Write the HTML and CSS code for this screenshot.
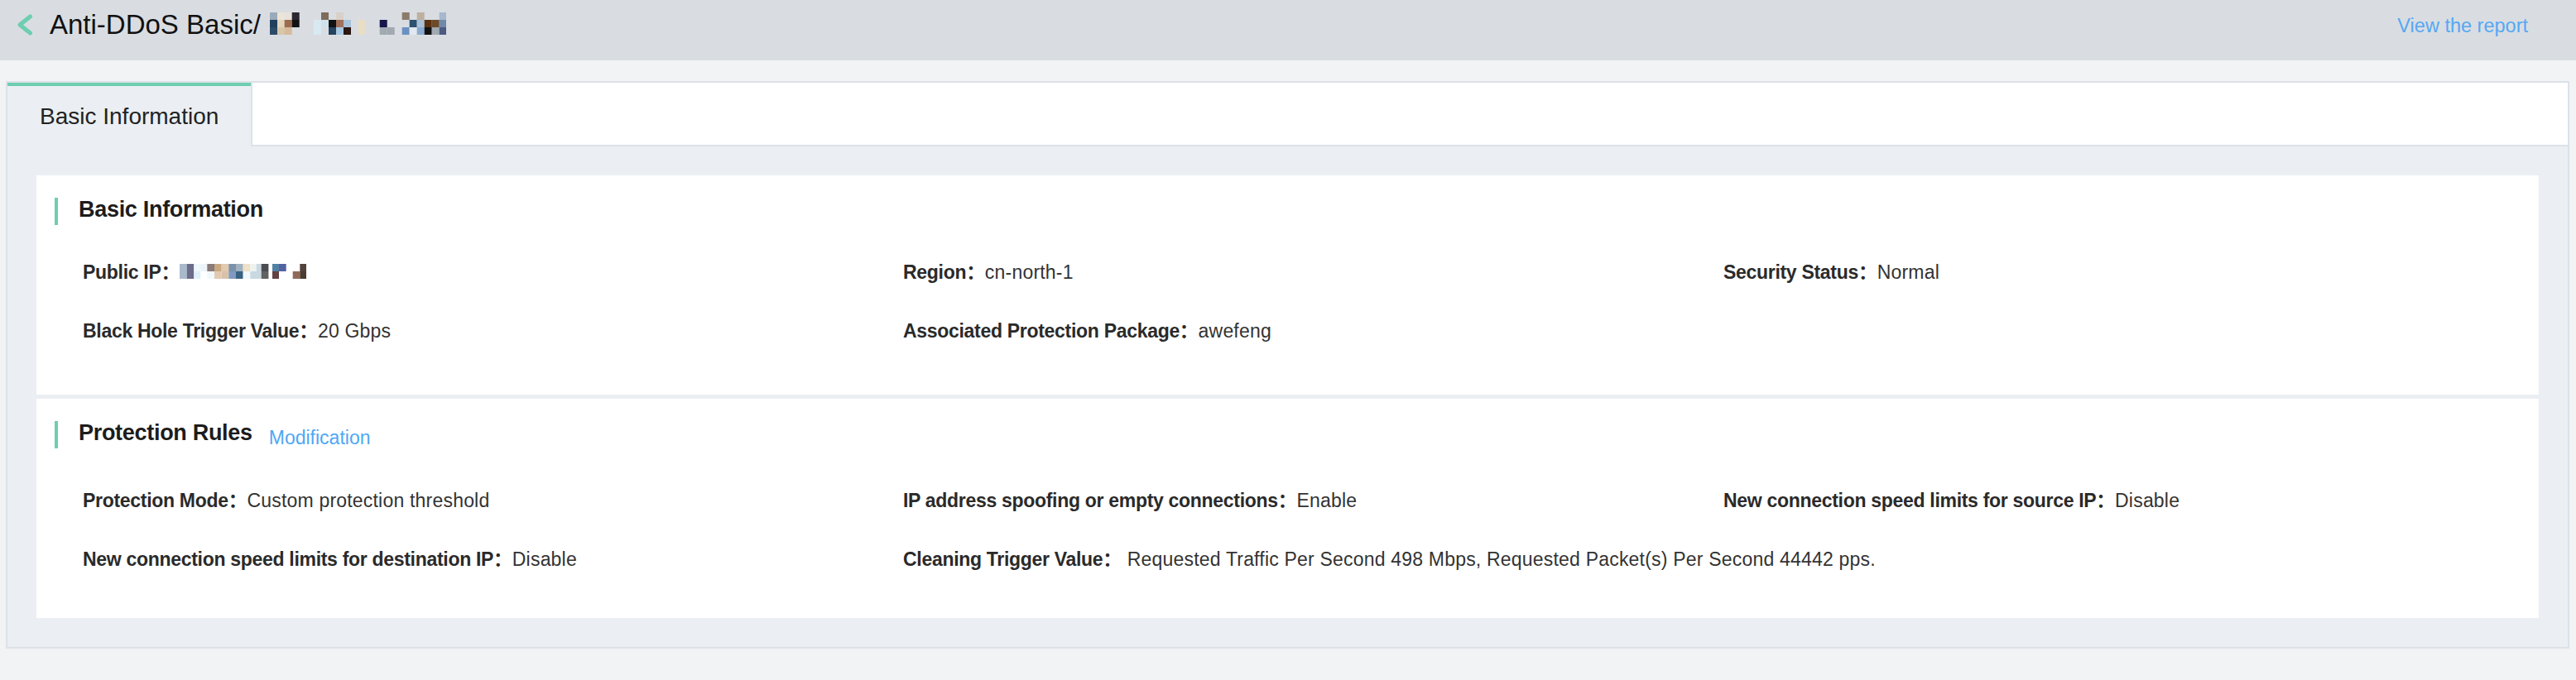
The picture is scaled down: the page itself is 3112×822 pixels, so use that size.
FILE: index.html
```html
<!DOCTYPE html>
<html lang="en">
<head>
<meta charset="utf-8">
<title>Anti-DDoS Basic</title>
<link rel="stylesheet" href="styles.css">
</head>
<body>
<header class="topbar">
  <div class="topbar-left">
    <svg class="back" width="20" height="26" viewBox="0 0 20 26" aria-hidden="true"><polyline points="16.5,3 4,13 16.5,23" fill="none" stroke="#6dceb0" stroke-width="5" stroke-linecap="round" stroke-linejoin="round"/></svg>
    <h1 class="page-title">Anti-DDoS Basic/</h1>
    <svg class="mosaic title-mosaic" width="213" height="27" viewBox="0 0 213 27" aria-hidden="true">
      <rect x="0" y="0" width="9" height="9" fill="#9aaabb"/>
      <rect x="9" y="0" width="9" height="9" fill="#ebe5d9"/>
      <rect x="17.7" y="0" width="9" height="9" fill="#e9e2dc"/>
      <rect x="26.7" y="0" width="9" height="9" fill="#2b2731"/>
      <rect x="62" y="0" width="9" height="9" fill="#7e6b5b"/>
      <rect x="80" y="0" width="9" height="9" fill="#d9d0c9"/>
      <rect x="159.7" y="0" width="9" height="9" fill="#8b7b6b"/>
      <rect x="177.7" y="0" width="9" height="9" fill="#beaf9e"/>
      <rect x="204.7" y="0" width="8.3" height="9" fill="#a7b7cd"/>
      <rect x="0" y="9" width="9" height="9" fill="#20405d"/>
      <rect x="9" y="9" width="9" height="9" fill="#e3d6bc"/>
      <rect x="17.7" y="9" width="9" height="9" fill="#9b6b51"/>
      <rect x="26.7" y="9" width="9" height="9" fill="#121212"/>
      <rect x="53" y="9" width="9" height="9" fill="#d9e9f1"/>
      <rect x="62" y="9" width="9" height="9" fill="#d0e1eb"/>
      <rect x="71" y="9" width="9" height="9" fill="#121212"/>
      <rect x="80" y="9" width="9" height="9" fill="#a1715b"/>
      <rect x="89" y="9" width="9" height="9" fill="#a7c2d9"/>
      <rect x="106.7" y="9" width="9" height="9" fill="#e9ddc5"/>
      <rect x="132.7" y="9" width="9" height="9" fill="#16164a"/>
      <rect x="168.7" y="9" width="9" height="9" fill="#2c5271"/>
      <rect x="177.7" y="9" width="9" height="9" fill="#a8c1d9"/>
      <rect x="186.7" y="9" width="9" height="9" fill="#5b3111"/>
      <rect x="195.7" y="9" width="9" height="9" fill="#6c4b2b"/>
      <rect x="204.7" y="9" width="8.3" height="9" fill="#7189a9"/>
      <rect x="0" y="18" width="9" height="9" fill="#2b4b69"/>
      <rect x="9" y="18" width="9" height="9" fill="#d9c7a9"/>
      <rect x="17.7" y="18" width="9" height="9" fill="#d7b99b"/>
      <rect x="53" y="18" width="9" height="9" fill="#d9e9f1"/>
      <rect x="71" y="18" width="9" height="9" fill="#25425f"/>
      <rect x="80" y="18" width="9" height="9" fill="#a9c9e1"/>
      <rect x="89" y="18" width="9" height="9" fill="#2b1611"/>
      <rect x="106.7" y="18" width="9" height="9" fill="#e9ddc5"/>
      <rect x="132.7" y="18" width="9" height="9" fill="#a1a9b1"/>
      <rect x="141.7" y="18" width="9" height="9" fill="#a1a9b1"/>
      <rect x="159.7" y="18" width="9" height="9" fill="#6b91c1"/>
      <rect x="168.7" y="18" width="9" height="9" fill="#e1e9f1"/>
      <rect x="177.7" y="18" width="9" height="9" fill="#8babd1"/>
      <rect x="186.7" y="18" width="9" height="9" fill="#121212"/>
      <rect x="195.7" y="18" width="9" height="9" fill="#a1a9b1"/>
      <rect x="204.7" y="18" width="8.3" height="9" fill="#4b5b81"/>
    </svg>
  </div>
  <a class="report-link" href="#">View the report</a>
</header>

<main class="page">
  <section class="card">
    <div class="tabs">
      <div class="tab tab--active">Basic Information</div>
      <div class="tab-fill"></div>
    </div>

    <div class="card-body">
      <div class="panel">
        <div class="panel-head"><h2 class="panel-title">Basic Information</h2></div>
        <div class="fields">
          <div class="field"><span class="label">Public IP：</span><svg class="mosaic ip-mosaic" width="153" height="18" viewBox="0 0 153 18" aria-hidden="true">
            <rect x="0" y="0" width="8.7" height="9" fill="#a9b9cc"/>
            <rect x="8.7" y="0" width="8.6" height="9" fill="#6b6b8a"/>
            <rect x="17.3" y="0" width="8" height="9" fill="#eef7fb"/>
            <rect x="25.3" y="0" width="8" height="9" fill="#eef3f7"/>
            <rect x="33.3" y="0" width="8.7" height="9" fill="#8b7a7a"/>
            <rect x="42" y="0" width="8.7" height="9" fill="#c8a982"/>
            <rect x="50.7" y="0" width="8.6" height="9" fill="#e2c9b0"/>
            <rect x="59.3" y="0" width="8.7" height="9" fill="#7a91a9"/>
            <rect x="68" y="0" width="8.7" height="9" fill="#a1b1c1"/>
            <rect x="76.7" y="0" width="8.6" height="9" fill="#efe0c8"/>
            <rect x="85.3" y="0" width="7.4" height="9" fill="#eef3ef"/>
            <rect x="92.7" y="0" width="6" height="9" fill="#c9d8e1"/>
            <rect x="98.7" y="0" width="8.7" height="9" fill="#4b4b52"/>
            <rect x="112" y="0" width="8" height="9" fill="#5181a2"/>
            <rect x="120" y="0" width="8.7" height="9" fill="#5262a2"/>
            <rect x="145.3" y="0" width="7.7" height="9" fill="#52423a"/>
            <rect x="0" y="9" width="8.7" height="9" fill="#a9b9cc"/>
            <rect x="8.7" y="9" width="8.6" height="9" fill="#6b6b8a"/>
            <rect x="17.3" y="9" width="8" height="9" fill="#e0f0f8"/>
            <rect x="33.3" y="9" width="8.7" height="9" fill="#f0f8fc"/>
            <rect x="42" y="9" width="8.7" height="9" fill="#e1c9b1"/>
            <rect x="50.7" y="9" width="8.6" height="9" fill="#d9c1a9"/>
            <rect x="59.3" y="9" width="8.7" height="9" fill="#8199c1"/>
            <rect x="68" y="9" width="8.7" height="9" fill="#396181"/>
            <rect x="76.7" y="9" width="8.6" height="9" fill="#f0f8fc"/>
            <rect x="85.3" y="9" width="13.4" height="9" fill="#c9d8e1"/>
            <rect x="98.7" y="9" width="8.7" height="9" fill="#616161"/>
            <rect x="112" y="9" width="8" height="9" fill="#624242"/>
            <rect x="136.7" y="9" width="8.6" height="9" fill="#916959"/>
            <rect x="145.3" y="9" width="7.7" height="9" fill="#4b3b31"/>
          </svg></div>
          <div class="field"><span class="label">Region：</span><span class="value">cn-north-1</span></div>
          <div class="field"><span class="label">Security Status：</span><span class="value">Normal</span></div>
          <div class="field"><span class="label">Black Hole Trigger Value：</span><span class="value">20 Gbps</span></div>
          <div class="field"><span class="label">Associated Protection Package：</span><span class="value">awefeng</span></div>
        </div>
      </div>

      <div class="panel panel--rules">
        <div class="panel-head"><h2 class="panel-title">Protection Rules</h2><a class="modify-link" href="#">Modification</a></div>
        <div class="fields">
          <div class="field"><span class="label">Protection Mode：</span><span class="value">Custom protection threshold</span></div>
          <div class="field"><span class="label">IP address spoofing or empty connections：</span><span class="value">Enable</span></div>
          <div class="field"><span class="label">New connection speed limits for source IP：</span><span class="value">Disable</span></div>
          <div class="field"><span class="label">New connection speed limits for destination IP：</span><span class="value">Disable</span></div>
          <div class="field"><span class="label">Cleaning Trigger Value：</span><span class="value">&nbsp;Requested Traffic Per Second 498 Mbps, Requested Packet(s) Per Second 44442 pps.</span></div>
        </div>
      </div>
    </div>
  </section>
</main>
</body>
</html>
```

FILE: styles.css
```css
* {
  box-sizing: border-box;
}

html, body {
  margin: 0;
  padding: 0;
}

body {
  background: #f2f3f5;
  font-family: "Liberation Sans", Arial, "Noto Sans CJK SC", sans-serif;
  color: #333333;
}

/* ---------- top bar ---------- */
.topbar {
  height: 73px;
  background: #d9dde2;
  display: flex;
  align-items: center;
  justify-content: space-between;
  padding: 0 58px 13px 20px;
}

.topbar-left {
  display: flex;
  align-items: center;
}

.back {
  display: block;
  margin-right: 20px;
}

.page-title {
  margin: 0;
  font-size: 33px;
  font-weight: normal;
  color: #111111;
  line-height: 38px;
  white-space: nowrap;
}

.title-mosaic {
  display: block;
  margin-left: 11px;
  margin-top: -3px;
}

.report-link {
  font-size: 23.5px;
  color: #55a8f3;
  text-decoration: none;
  line-height: 30px;
  margin-top: 2px;
}

/* ---------- page / card ---------- */
.page {
  padding: 25px 8px 0 7px;
}

.card {
  background: #ebeff3;
  border: 2px solid #dce2e8;
}

.tabs {
  display: flex;
  height: 77px;
}

.tab {
  border-top: 4px solid #6dceb0;
  padding: 0 39px;
  font-size: 28px;
  line-height: 73px;
  color: #222222;
  white-space: nowrap;
}

.tab-fill {
  flex: 1;
  background: #ffffff;
  border-left: 2px solid #dce2e8;
  border-bottom: 2px solid #dce2e8;
}

.card-body {
  padding: 35px;
  display: flex;
  flex-direction: column;
  gap: 5px;
}

/* ---------- panels ---------- */
.panel {
  background: #ffffff;
  padding: 27px 22px 41px 22px;
}

.panel--rules {
  padding-bottom: 35px;
}

.panel-head {
  height: 33px;
  border-left: 4px solid #6dceb0;
  padding-left: 25px;
  line-height: 29px;
  white-space: nowrap;
}

.panel-title {
  display: inline;
  margin: 0;
  font-size: 27px;
  font-weight: bold;
  letter-spacing: -0.3px;
  color: #1c1c1c;
}

.modify-link {
  margin-left: 20px;
  font-size: 23px;
  color: #4ea8f5;
  text-decoration: none;
  vertical-align: -5px;
}

.fields {
  display: grid;
  grid-template-columns: repeat(3, 991px);
  grid-auto-rows: 71px;
  align-items: center;
  margin: 22px 0 0 34px;
  font-size: 23px;
  line-height: 31px;
  white-space: nowrap;
}

.panel--rules .fields {
  margin-top: 28px;
}

.field {
  display: flex;
  align-items: center;
}

.label {
  font-weight: bold;
  letter-spacing: -0.3px;
  color: #2a2a2a;
}

.value {
  letter-spacing: 0.2px;
  color: #333333;
}

.ip-mosaic {
  display: block;
  margin-top: -3px;
}
```
